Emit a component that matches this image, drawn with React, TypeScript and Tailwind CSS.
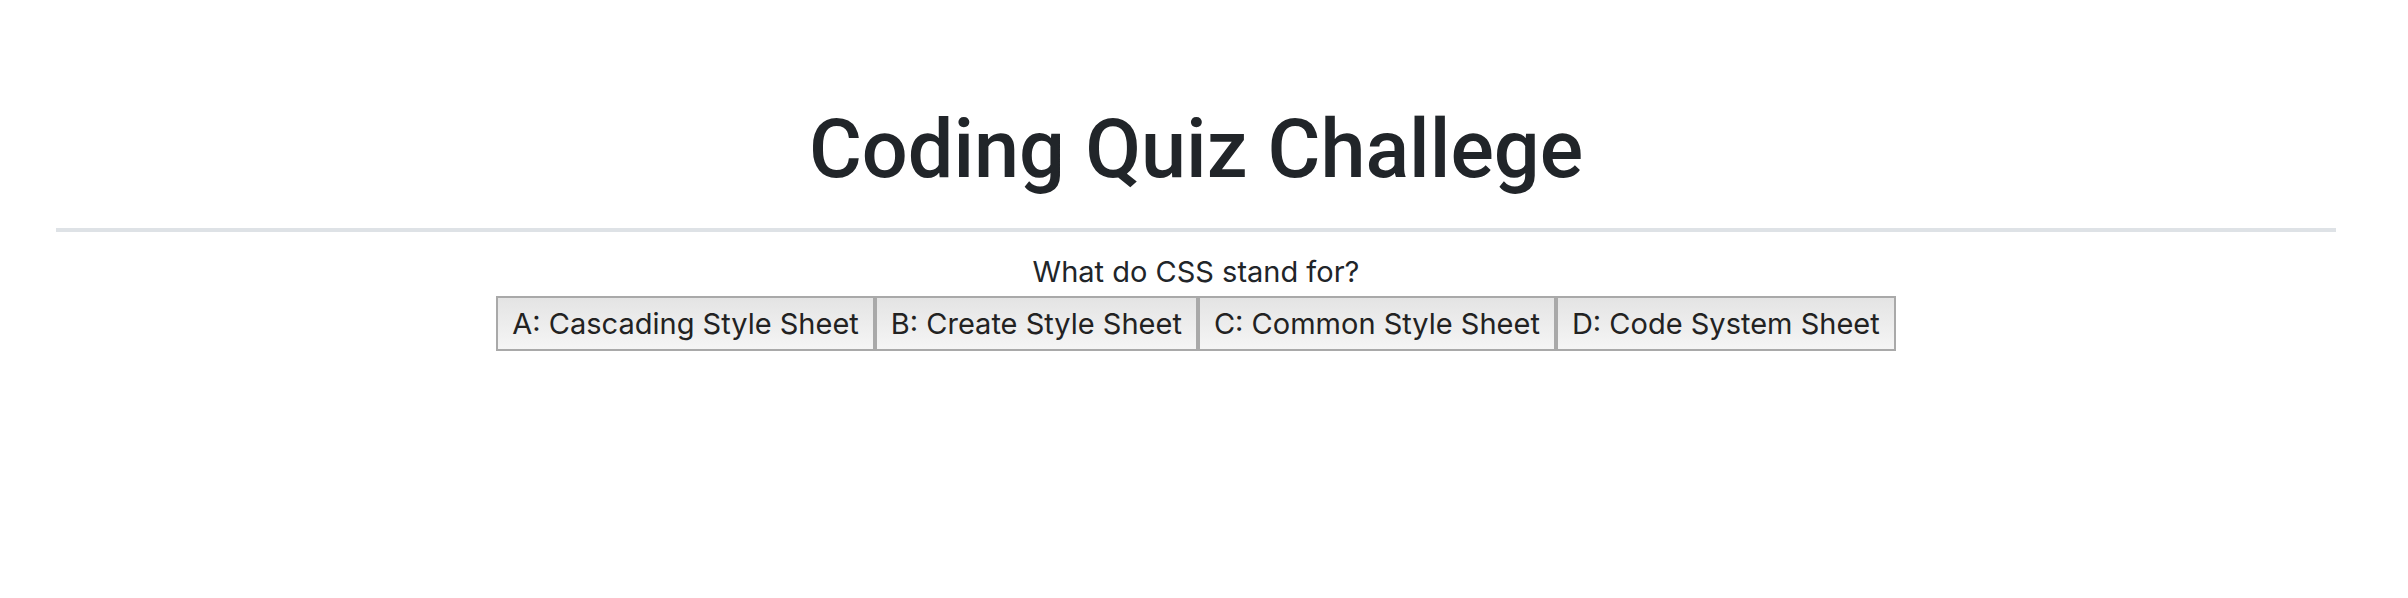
import React from "react";

const answers = [
  "A: Cascading Style Sheet",
  "B: Create Style Sheet",
  "C: Common Style Sheet",
  "D: Code System Sheet",
];

export default function App() {
  return (
    <div className="w-[2392px] min-h-[598px] bg-white px-[56px] text-[#212529]">
      <h1 className="pt-[102px] text-center text-[81px] leading-[96px] font-medium font-['Roboto','Liberation_Sans',Arial,sans-serif]">
        Coding Quiz Challege
      </h1>
      <div className="mt-[30px] h-[4px] bg-[#dee2e6]" />
      <div className="font-['Inter',sans-serif]">
        <p className="mt-[22px] text-center text-[29px] leading-[35px]">What do CSS stand for?</p>
        <div className="mt-[7px] flex justify-center">
          {answers.map((a) => (
            <button
              key={a}
              className="border-2 border-[#a9a9a9] bg-gradient-to-b from-[#e4e4e4] to-[#f5f5f5] px-[14px] py-[8px] text-[29px] leading-[35px] text-[#222]"
            >
              {a}
            </button>
          ))}
        </div>
      </div>
    </div>
  );
}
